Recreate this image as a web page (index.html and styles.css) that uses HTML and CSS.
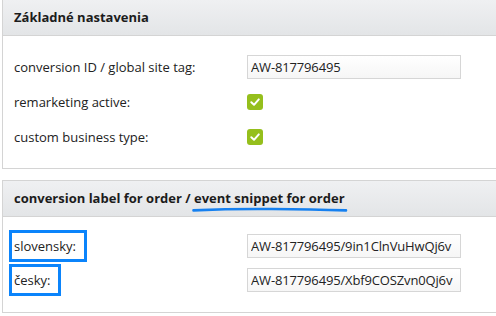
FILE: index.html
```html
<!DOCTYPE html>
<html lang="sk">
<head>
    <meta charset="UTF-8">
    <meta name="viewport" content="width=device-width, initial-scale=1.0">
    <title>Nastavenia</title>
    <link rel="stylesheet" href="styles.css">
</head>
<body>
    <div class="panel first">
        <div class="panel-head">Základné nastavenia</div>
        <div class="panel-body">
            <div class="row">
                <label>conversion ID / global site tag:</label>
                <input type="text" value="AW-817796495">
            </div>
            <div class="row">
                <label>remarketing active:</label>
                <span class="check"><svg width="16" height="16" viewBox="0 0 16 16"><path d="M4.3 8.3 L7 10.8 L11.8 5.4" fill="none" stroke="#fff" stroke-width="2" stroke-linecap="round" stroke-linejoin="round"/></svg></span>
            </div>
            <div class="row">
                <label>custom business type:</label>
                <span class="check"><svg width="16" height="16" viewBox="0 0 16 16"><path d="M4.3 8.3 L7 10.8 L11.8 5.4" fill="none" stroke="#fff" stroke-width="2" stroke-linecap="round" stroke-linejoin="round"/></svg></span>
            </div>
        </div>
    </div>

    <div class="panel second">
        <div class="panel-head">conversion label for order / <span class="underlined">event snippet for order<svg class="scribble" width="156" height="6" viewBox="0 0 156 6"><path d="M1.5 3.4 Q 40 1.6 80 2 T 154 3.4" fill="none" stroke="#1580f0" stroke-width="2.6" stroke-linecap="round"/></svg></span></div>
        <div class="panel-body">
            <div class="row">
                <label><span class="mark">slovensky:</span></label>
                <input type="text" value="AW-817796495/9in1ClnVuHwQj6v">
            </div>
            <div class="row">
                <label><span class="mark">česky:</span></label>
                <input type="text" value="AW-817796495/Xbf9COSZvn0Qj6v">
            </div>
        </div>
    </div>
</body>
</html>
```

FILE: styles.css
```css
html, body {
    margin: 0;
    overflow: hidden;
}
body {
    font-family: "Open Sans", Arial, sans-serif;
    font-size: 13px;
    color: #222;
    background: #fff;
    padding-left: 2px;
}
.panel {
    width: 520px;
    border: 1px solid #d4d4d4;
    background: #fff;
}
.panel.first {
    margin-top: -1px;
}
.panel.second {
    margin-top: 11px;
}
.panel-head {
    height: 35px;
    line-height: 35px;
    padding-left: 11px;
    font-weight: bold;
    color: #1c1c1c;
    background: linear-gradient(#eff0f2, #e3e5e7);
    border-bottom: 1px solid #d4d4d4;
}
.panel.first .panel-body {
    padding: 13px 0 14px;
}
.panel.first .row {
    height: 35px;
}
.panel.second .panel-body {
    padding: 12px 0 15px;
}
.row {
    display: flex;
    align-items: center;
    height: 34px;
}
.row label {
    width: 233px;
    padding-left: 11px;
}
.row input {
    width: 207px;
    height: 22px;
    margin: 0;
    padding: 0 2px 0 3px;
    box-sizing: content-box;
    border: 1px solid #d6d6d6;
    background: linear-gradient(#fff, #f6f6f6);
    font-family: "Open Sans", Arial, sans-serif;
    font-size: 13px;
    letter-spacing: -0.15px;
    color: #222;
}
.check {
    display: block;
    width: 16px;
    height: 16px;
    border-radius: 3px;
    background: #95bf1c;
}
.check svg {
    display: block;
}
.mark {
    display: inline-block;
    padding: 4px 8px 4px 2px;
    margin: -7px -11px -7px -5px;
    border: 3px solid #0b84fb;
}
.underlined {
    position: relative;
}
.scribble {
    position: absolute;
    left: -2px;
    bottom: -6px;
}
```
